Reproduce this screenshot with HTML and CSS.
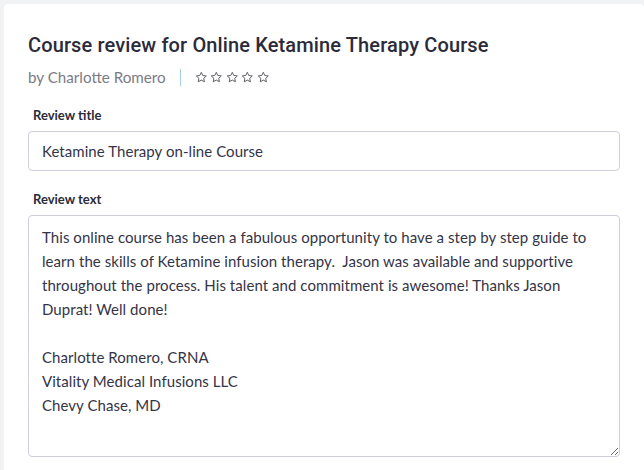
FILE: index.html
```html
<!DOCTYPE html>
<html lang="en">
<head>
<meta charset="utf-8">
<title>Course review</title>
<link rel="stylesheet" href="styles.css">
</head>
<body>
<div class="card">
  <h1 class="title">Course review for Online Ketamine Therapy Course</h1>
  <div class="meta">
    <span class="author">by Charlotte Romero</span>
    <span class="sep"></span>
    <span class="stars">
      <svg class="star" viewBox="0 0 24 24"><path d="M12 2.5l2.9 6.1 6.6.8-4.9 4.6 1.3 6.6L12 17.3l-5.9 3.3 1.3-6.6-4.9-4.6 6.6-.8z"/></svg>
      <svg class="star" viewBox="0 0 24 24"><path d="M12 2.5l2.9 6.1 6.6.8-4.9 4.6 1.3 6.6L12 17.3l-5.9 3.3 1.3-6.6-4.9-4.6 6.6-.8z"/></svg>
      <svg class="star" viewBox="0 0 24 24"><path d="M12 2.5l2.9 6.1 6.6.8-4.9 4.6 1.3 6.6L12 17.3l-5.9 3.3 1.3-6.6-4.9-4.6 6.6-.8z"/></svg>
      <svg class="star" viewBox="0 0 24 24"><path d="M12 2.5l2.9 6.1 6.6.8-4.9 4.6 1.3 6.6L12 17.3l-5.9 3.3 1.3-6.6-4.9-4.6 6.6-.8z"/></svg>
      <svg class="star" viewBox="0 0 24 24"><path d="M12 2.5l2.9 6.1 6.6.8-4.9 4.6 1.3 6.6L12 17.3l-5.9 3.3 1.3-6.6-4.9-4.6 6.6-.8z"/></svg>
    </span>
  </div>
  <label class="label" for="rtitle">Review title</label>
  <input class="input" id="rtitle" type="text" value="Ketamine Therapy on-line Course">
  <label class="label" for="rtext">Review text</label>
  <textarea class="textarea" id="rtext">This online course has been a fabulous opportunity to have a step by step guide to
learn the skills of Ketamine infusion therapy.  Jason was available and supportive
throughout the process. His talent and commitment is awesome! Thanks Jason
Duprat! Well done!

Charlotte Romero, CRNA
Vitality Medical Infusions LLC
Chevy Chase, MD</textarea>
</div>
</body>
</html>
```

FILE: styles.css
```css
html, body {
  margin: 0;
  padding: 0;
  background: #f1f2f4;
  height: 100%;
  overflow: hidden;
}
body {
  padding: 4px 0 0 4px;
  box-sizing: border-box;
  font-family: Lato, "Liberation Sans", sans-serif;
  color: #343447;
}
.card {
  background: #ffffff;
  border-radius: 4px 4px 0 0;
  padding: 26px 24px 24px 24px;
  min-height: 600px;
  display: flex;
  flex-direction: column;
  align-items: flex-start;
}
.title {
  margin: 0;
  font-family: Roboto, "Liberation Sans", sans-serif;
  font-weight: 500;
  font-size: 20px;
  line-height: 30px;
  letter-spacing: 0.13px;
  color: #2b2b3a;
}
.meta {
  display: flex;
  align-items: center;
  margin-top: 2px;
  height: 30px;
}
.author {
  font-size: 15.2px;
  color: #7b7b85;
}
.sep {
  width: 1px;
  height: 17px;
  background: #a9cbe8;
  margin: 0 14px 0 14px;
}
.stars {
  display: flex;
  gap: 3px;
}
.star {
  width: 12.6px;
  height: 12.6px;
  fill: none;
  stroke: #5f5f66;
  stroke-width: 1.9;
  stroke-linejoin: round;
}
.label {
  font-size: 13px;
  font-weight: 700;
  color: #2b2b3a;
  margin: 15px 0 0 5px;
  line-height: 16px;
}
.input, .textarea {
  box-sizing: border-box;
  width: 592px;
  border: 1px solid #cfcfdc;
  border-radius: 4px;
  background: #fff;
  font-family: Lato, "Liberation Sans", sans-serif;
  font-size: 15px;
  letter-spacing: 0.06px;
  color: #343447;
  padding: 0 13px;
  outline: none;
}
.input {
  height: 40px;
  margin-top: 8px;
  margin-bottom: 5px;
}
.textarea {
  height: 242px;
  margin-top: 8px;
  padding-top: 9px;
  line-height: 24px;
  white-space: pre;
  overflow: hidden;
  resize: vertical;
}
```
